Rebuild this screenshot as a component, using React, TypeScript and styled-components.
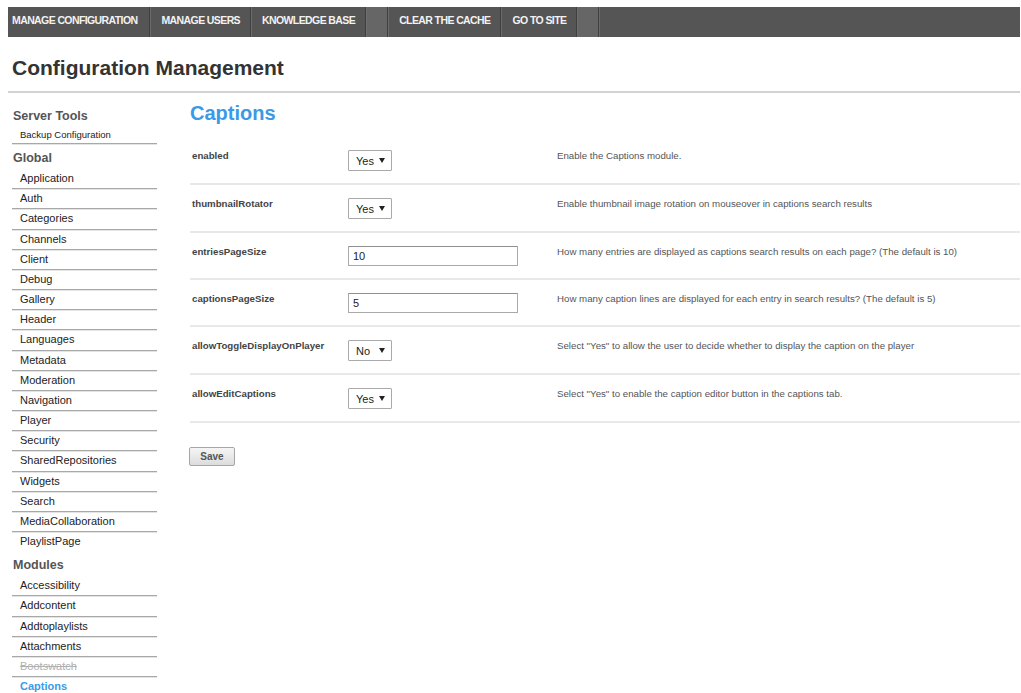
import { FC } from 'react';
import styled, { createGlobalStyle } from 'styled-components';

type Setting = {
  name: string;
  kind: 'select' | 'text';
  value: string;
  help: string;
};

const GlobalStyle = createGlobalStyle`
  body {
    margin: 7px 1px 0 8px;
    background: #fff;
    font-family: 'Liberation Sans', Arial, sans-serif;
    color: #222;
  }
`;

const TopNav = styled.nav`
  display: flex;
  height: 30px;
  background: #555;
`;

const NavItem = styled.a<{ $first?: boolean }>`
  display: block;
  padding: ${props => (props.$first ? '0 12px 0 4px' : '0 10px')};
  line-height: 27px;
  font-size: 10.5px;
  letter-spacing: -0.6px;
  font-weight: bold;
  color: #f2f2f2;
  text-decoration: none;
  white-space: nowrap;
  border-left: ${props => (props.$first ? 'none' : '1px solid #6b6b6b')};
  border-right: 1px solid #3f3f3f;
`;

const NavSpacer = styled.span`
  width: 20px;
  background: #666;
  border-left: 1px solid #6f6f6f;
  border-right: 1px solid #3f3f3f;
`;

const NavRest = styled.span`
  flex: 1;
  border-left: 1px solid #6b6b6b;
`;

const Title = styled.h1`
  margin: 18px 0 0;
  padding: 0 0 11px 4px;
  font-size: 21px;
  line-height: 25px;
  font-weight: bold;
  color: #333;
  border-bottom: 2px solid #d2d2d2;
`;

const Layout = styled.div`
  display: flex;
  gap: 33px;
  padding-left: 4px;
`;

const Sidebar = styled.aside`
  width: 145px;
  flex-shrink: 0;
  padding-top: 9px;
`;

const SideHeading = styled.div`
  padding: 6px 0 3px 1px;
  font-size: 12.5px;
  line-height: 16px;
  font-weight: bold;
  color: #555;
`;

const SideItem = styled.a<{ $small?: boolean; $disabled?: boolean; $active?: boolean }>`
  display: block;
  padding-left: 8px;
  font-size: ${props => (props.$small ? '9.5px' : '11px')};
  line-height: ${props => (props.$small ? '16px' : '19.17px')};
  font-weight: ${props => (props.$active ? 'bold' : 'normal')};
  color: ${props => (props.$active ? '#3a9ae8' : props.$disabled ? '#b0b0b0' : '#222')};
  text-decoration: ${props => (props.$disabled ? 'line-through' : 'none')};
  border-bottom: 1px solid #a8a8a8;
  box-shadow: 0 1px 0 #e4e4e4;
  &:last-child {
    border-bottom: none;
    box-shadow: none;
  }
`;

const BackupList = styled.div`
  border-bottom: 1px solid #a8a8a8;
  box-shadow: 0 1px 0 #e4e4e4;
`;

const Main = styled.main`
  flex: 1;
  min-width: 0;
`;

const SectionTitle = styled.h2`
  margin: 8px 0 12px;
  font-size: 20px;
  line-height: 24px;
  font-weight: bold;
  color: #3a9ae8;
`;

const SettingRow = styled.div`
  display: grid;
  grid-template-columns: 158px 209px 1fr;
  align-items: start;
  padding: 13px 0 12px;
  border-bottom: 2px solid #e8e8e8;
`;

const Label = styled.div`
  padding: 0 0 0 2px;
  font-size: 9.7px;
  line-height: 11px;
  font-weight: bold;
  color: #444;
`;

const Help = styled.div`
  font-size: 9.7px;
  line-height: 11px;
  color: #555;
`;

const SelectWrap = styled.div`
  position: relative;
  width: 44px;
  height: 21px;

  &::after {
    content: '';
    position: absolute;
    right: 7px;
    top: 8px;
    border-left: 3px solid transparent;
    border-right: 3px solid transparent;
    border-top: 5px solid #222;
    pointer-events: none;
  }
`;

const Select = styled.select`
  appearance: none;
  width: 100%;
  height: 100%;
  margin: 0;
  padding: 0 0 0 7px;
  box-sizing: border-box;
  font-family: 'Liberation Sans', Arial, sans-serif;
  font-size: 11px;
  color: #222;
  background: #fff;
  border: 1px solid #a9a9a9;
  border-radius: 1px;
`;

const TextInput = styled.input`
  width: 170px;
  height: 20px;
  margin: 0;
  padding: 0 0 0 4px;
  box-sizing: border-box;
  font-family: 'Liberation Sans', Arial, sans-serif;
  font-size: 11px;
  color: #222;
  background: #fff;
  border: 1px solid #a9a9a9;
  border-top-color: #8f8f8f;
  border-radius: 1px;
`;

const SaveButton = styled.button`
  margin: 24px 0 0 -1px;
  width: 46px;
  height: 19px;
  padding: 0;
  font-family: 'Liberation Sans', Arial, sans-serif;
  font-size: 10px;
  font-weight: bold;
  color: #555;
  background: linear-gradient(#f5f5f5, #dcdcdc);
  border: 1px solid #a6a6a6;
  border-radius: 2px;
`;

const globalModules = [
  'Application',
  'Auth',
  'Categories',
  'Channels',
  'Client',
  'Debug',
  'Gallery',
  'Header',
  'Languages',
  'Metadata',
  'Moderation',
  'Navigation',
  'Player',
  'Security',
  'SharedRepositories',
  'Widgets',
  'Search',
  'MediaCollaboration',
  'PlaylistPage',
];

const modules = [
  { name: 'Accessibility' },
  { name: 'Addcontent' },
  { name: 'Addtoplaylists' },
  { name: 'Attachments' },
  { name: 'Bootswatch', disabled: true },
  { name: 'Captions', active: true },
];

const settings: Setting[] = [
  { name: 'enabled', kind: 'select', value: 'Yes', help: 'Enable the Captions module.' },
  {
    name: 'thumbnailRotator',
    kind: 'select',
    value: 'Yes',
    help: 'Enable thumbnail image rotation on mouseover in captions search results',
  },
  {
    name: 'entriesPageSize',
    kind: 'text',
    value: '10',
    help: 'How many entries are displayed as captions search results on each page? (The default is 10)',
  },
  {
    name: 'captionsPageSize',
    kind: 'text',
    value: '5',
    help: 'How many caption lines are displayed for each entry in search results? (The default is 5)',
  },
  {
    name: 'allowToggleDisplayOnPlayer',
    kind: 'select',
    value: 'No',
    help: 'Select "Yes" to allow the user to decide whether to display the caption on the player',
  },
  {
    name: 'allowEditCaptions',
    kind: 'select',
    value: 'Yes',
    help: 'Select "Yes" to enable the caption editor button in the captions tab.',
  },
];

const SettingField: FC<{ setting: Setting }> = ({ setting }) => {
  if (setting.kind === 'text') {
    return <TextInput type="text" defaultValue={setting.value} />;
  }
  return (
    <SelectWrap>
      <Select defaultValue={setting.value}>
        <option value="Yes">Yes</option>
        <option value="No">No</option>
      </Select>
    </SelectWrap>
  );
};

export default function App() {
  return (
    <>
      <GlobalStyle />
      <TopNav>
        <NavItem $first>MANAGE CONFIGURATION</NavItem>
        <NavItem>MANAGE USERS</NavItem>
        <NavItem>KNOWLEDGE BASE</NavItem>
        <NavSpacer />
        <NavItem>CLEAR THE CACHE</NavItem>
        <NavItem>GO TO SITE</NavItem>
        <NavSpacer />
        <NavRest />
      </TopNav>
      <Title>Configuration Management</Title>
      <Layout>
        <Sidebar>
          <SideHeading>Server Tools</SideHeading>
          <BackupList>
            <SideItem $small>Backup Configuration</SideItem>
          </BackupList>
          <SideHeading>Global</SideHeading>
          <div>
            {globalModules.map(name => (
              <SideItem key={name}>{name}</SideItem>
            ))}
          </div>
          <SideHeading>Modules</SideHeading>
          <div>
            {modules.map(m => (
              <SideItem key={m.name} $disabled={m.disabled} $active={m.active}>
                {m.name}
              </SideItem>
            ))}
          </div>
        </Sidebar>
        <Main>
          <SectionTitle>Captions</SectionTitle>
          {settings.map(s => (
            <SettingRow key={s.name}>
              <Label>{s.name}</Label>
              <SettingField setting={s} />
              <Help>{s.help}</Help>
            </SettingRow>
          ))}
          <SaveButton>Save</SaveButton>
        </Main>
      </Layout>
    </>
  );
}
